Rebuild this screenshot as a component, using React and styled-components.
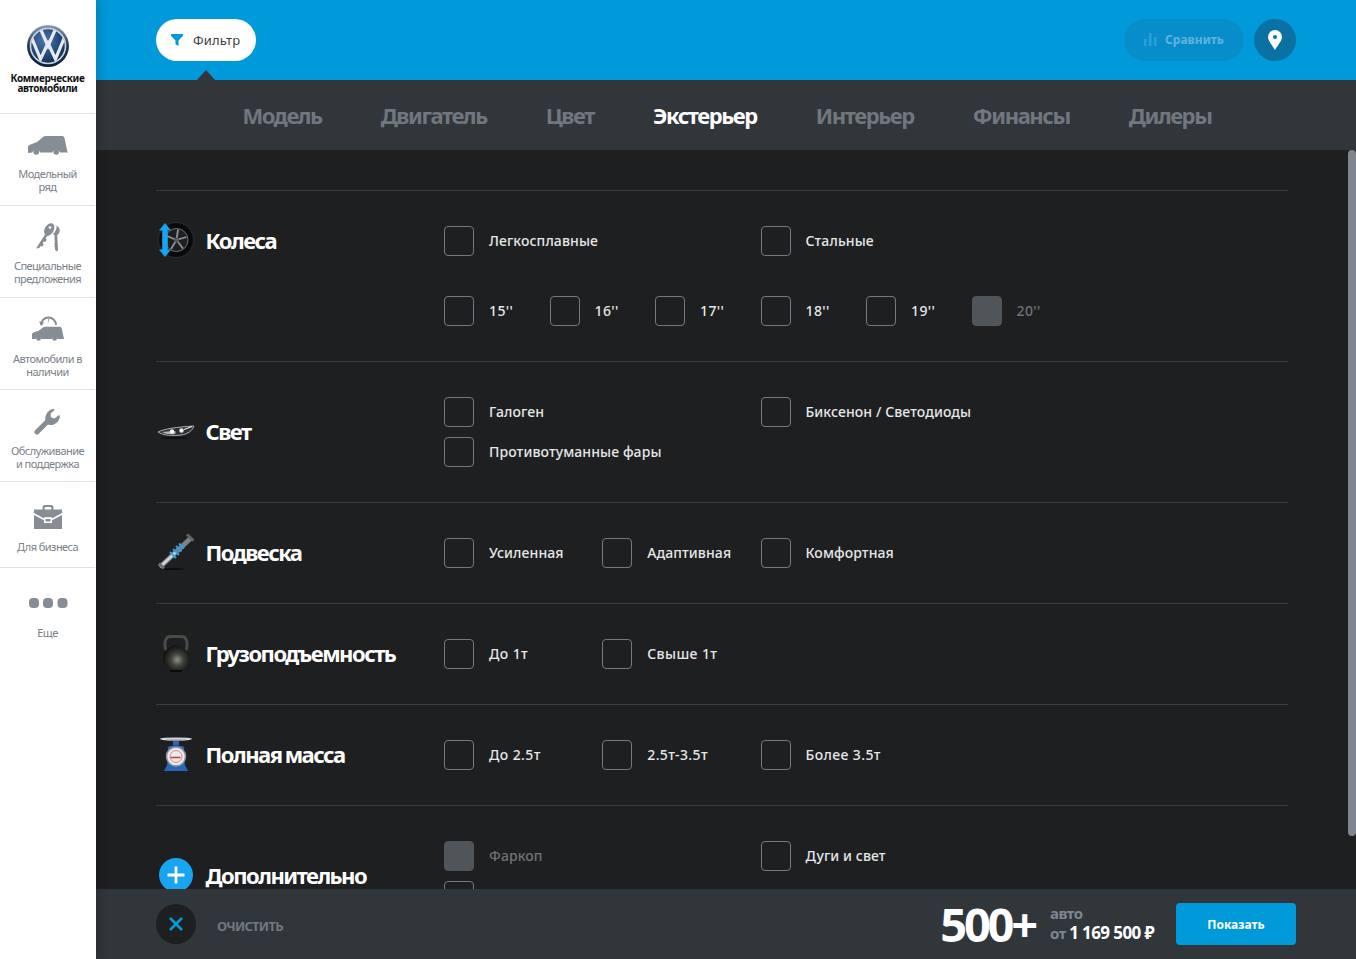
import styled, { createGlobalStyle } from 'styled-components'

const Global = createGlobalStyle`
  html, body { margin: 0; height: 100%; overflow: hidden; }
  body { font-family: "Noto Sans", "Open Sans", "Liberation Sans", sans-serif; background: #1e1f21; }
`

const Page = styled.div`
  display: flex;
  height: 100vh;
`

const Sidebar = styled.aside`
  position: relative;
  z-index: 2;
  flex: 0 0 96px;
  background: #fff;
  box-shadow: 3px 0 10px rgba(0, 0, 0, 0.18);
`

const Brand = styled.div`
  height: 114px;
  box-sizing: border-box;
  padding-top: 24px;
  margin-right: 1px;
  border-bottom: 1px solid #dfe1e3;
  text-align: center;
  font-size: 10px;
  font-weight: 700;
  line-height: 10px;
  color: #0f1113;
  letter-spacing: -0.35px;

  svg { display: block; margin: 0 auto 5px; }
`

const NavItem = styled.div`
  height: ${p => p.$h}px;
  box-sizing: border-box;
  margin-right: 1px;
  border-bottom: ${p => (p.$last ? 'none' : '1px solid #dfe1e3')};
  padding-top: ${p => p.$pad}px;
  text-align: center;
  font-size: 11px;
  line-height: 13px;
  letter-spacing: -0.55px;
  color: #7a8188;

  svg { display: block; margin: 0 auto ${p => p.$iconGap}px; }
`

const Main = styled.main`
  flex: 1;
  min-width: 0;
  display: flex;
  flex-direction: column;
`

const TopBar = styled.header`
  flex: 0 0 80px;
  box-sizing: border-box;
  padding: 19px 60px;
  display: flex;
  align-items: flex-start;
  gap: 10px;
  background: #0099da;
`

const FilterButton = styled.div`
  position: relative;
  width: 100px;
  height: 42px;
  box-sizing: border-box;
  padding-left: 15px;
  display: flex;
  align-items: center;
  gap: 10px;
  margin-right: auto;
  border-radius: 21px;
  background: #fff;
  font-size: 13px;
  letter-spacing: 0.1px;
  color: #3a3f44;

  &::after {
    content: '';
    position: absolute;
    left: 41px;
    top: 51px;
    border-left: 9px solid transparent;
    border-right: 9px solid transparent;
    border-bottom: 10px solid #31363b;
  }
`

const CompareButton = styled.div`
  width: 120px;
  height: 42px;
  box-sizing: border-box;
  padding-bottom: 1px;
  display: flex;
  align-items: center;
  justify-content: center;
  gap: 8px;
  border-radius: 21px;
  background: #088dca;
  font-size: 12px;
  font-weight: 700;
  color: #5fb4de;
`

const PinButton = styled.div`
  width: 42px;
  height: 42px;
  display: flex;
  align-items: center;
  justify-content: center;
  border-radius: 50%;
  background: #0a72a3;
`

const Tabs = styled.nav`
  flex: 0 0 70px;
  box-sizing: border-box;
  padding-left: 2px;
  display: flex;
  align-items: center;
  justify-content: center;
  gap: 59px;
  background: #31363b;
`

const Tab = styled.span`
  font-size: 22px;
  font-weight: 700;
  letter-spacing: -1.42px;
  color: ${p => (p.$active ? '#fff' : '#70777e')};
`

const Body = styled.div`
  position: relative;
  flex: 1;
  min-height: 0;
  overflow: hidden;
  padding: 40px 68px 0 60px;
  background: #1e1f21;
`

const ScrollThumb = styled.div`
  position: absolute;
  top: 0;
  right: 0;
  width: 8px;
  height: 686px;
  border-radius: 4px;
  background: #7f868d;
`

const Row = styled.section`
  display: grid;
  grid-template-columns: 288px 633px;
  padding: 35px 0;
  border-top: 1px solid #393c40;
`

const RowTitle = styled.div`
  display: flex;
  align-items: center;
  box-sizing: border-box;
  height: ${p => (p.$top ? '30px' : 'auto')};
  padding-bottom: 2px;
  font-size: 22px;
  font-weight: 700;
  line-height: 26px;
  letter-spacing: -1.5px;
  word-spacing: -1px;
  color: #fff;

  svg { flex: none; margin: -6px 9.5px -6px 0; }
`

const Options = styled.div`
  display: grid;
  grid-template-columns: repeat(12, 1fr);
  row-gap: ${p => p.$gap}px;
`

const Option = styled.label`
  grid-column: span ${p => p.$span};
  display: flex;
  align-items: center;
  gap: 15px;
  height: 30px;
  font-size: 14px;
  font-weight: 500;
  letter-spacing: ${p => (p.$digits ? '0.4px' : '0.1px')};
  color: ${p => (p.$off ? '#6d7378' : '#e6e7e8')};
`

const OptionText = styled.span`
  padding-bottom: 1px;
`

const Box = styled.span`
  flex: none;
  width: 30px;
  height: 30px;
  box-sizing: border-box;
  border-radius: 4px;
  border: 1px solid ${p => (p.$off ? '#50555a' : '#74797e')};
  background: ${p => (p.$off ? '#50555a' : 'transparent')};
`

const Footer = styled.footer`
  position: relative;
  flex: 0 0 70px;
  box-sizing: border-box;
  padding: 0 60px;
  display: flex;
  align-items: center;
  background: #31363b;
`

const ClearButton = styled.div`
  width: 40px;
  height: 40px;
  margin-right: 21px;
  display: flex;
  align-items: center;
  justify-content: center;
  border-radius: 50%;
  background: #1e1f21;
`

const ClearText = styled.span`
  margin-right: auto;
  padding-top: 3px;
  font-size: 13px;
  font-weight: 700;
  letter-spacing: -0.75px;
  color: #70777e;
`

const Count = styled.span`
  margin-right: 15px;
  font-size: 47px;
  font-weight: 700;
  letter-spacing: -3.2px;
  line-height: 46px;
  color: #fff;
`

const PriceBlock = styled.div`
  width: 126px;
  padding-bottom: 2px;
  font-size: 15px;
  font-weight: 700;
  line-height: 19px;
  letter-spacing: -0.5px;
  color: #7f868d;
`

const Price = styled.span`
  font-size: 17px;
  letter-spacing: -0.6px;
  color: #fff;
`

const ShowButton = styled.div`
  width: 120px;
  height: 42px;
  display: flex;
  align-items: center;
  justify-content: center;
  border-radius: 4px;
  background: #0099da;
  font-size: 12px;
  font-weight: 700;
  color: #fff;
`

const VwLogo = () => (
  <svg width="44" height="44" viewBox="0 0 44 44">
    <defs>
      <radialGradient id="vwBlue" cx="0.4" cy="0.35" r="0.75">
        <stop offset="0" stopColor="#4c77ab" />
        <stop offset="0.6" stopColor="#224775" />
        <stop offset="1" stopColor="#0f2343" />
      </radialGradient>
      <linearGradient id="vwRing" x1="0" y1="0" x2="0" y2="1">
        <stop offset="0" stopColor="#8a9db3" />
        <stop offset="0.5" stopColor="#22395a" />
        <stop offset="1" stopColor="#0c1c38" />
      </linearGradient>
      <clipPath id="vwClip"><circle cx="22" cy="22" r="17" /></clipPath>
    </defs>
    <circle cx="22" cy="22" r="21" fill="url(#vwRing)" />
    <circle cx="22" cy="22" r="17.5" fill="url(#vwBlue)" stroke="#c9d2dc" strokeWidth="1.6" />
    <g clipPath="url(#vwClip)" fill="none" stroke="#e6eaee" strokeWidth="3.2">
      <path d="M14.500 5 22 22 29.500 5" />
      <path d="M5 12 14.500 35 22 19 29.500 35 39 12" />
    </g>
  </svg>
)

const Van = () => (
  <svg width="42" height="20" viewBox="0 0 42 20" fill="#868d94">
    <path d="M1 18V12.500c0-1.500 1-2.600 2.500-3L10 7l6-5c1-.8 2-1 3.500-1H35c1.500 0 2.200.7 2.500 2L40 15l.8 2.500H33a4 4 0 0 0-7.600 0H13a4 4 0 0 0-7.600 0Z" />
    <circle cx="9.200" cy="17" r="2.800" />
    <circle cx="29.200" cy="17" r="2.800" />
  </svg>
)

const Keys = () => (
  <svg width="26" height="32" viewBox="0 0 26 32" fill="#868d94">
    <path d="M1 28.500 10 14.500c-1.500-2-1.200-5 .5-7.500 2-2.800 5-4.500 7.300-3.200 2 1.300 2 5 .3 8-1.500 2.500-3.700 4.300-6 4.300l-1.500 2.400 1.200 1.200-1.500 2.200-1.500-.4-1 1.600.8 1.400-1.500 2.200-1.500-.6-1.300 2Z" />
    <path d="M20 5.500c2.500 0 4.700 2 4.700 5 0 2-1 3.600-2.500 4.500l.8 15-1.300 1.600-1.800-2 .3-1.800-1-1 .8-1.300-.8-1.200.6-1.300-.4-8.300-1.800-.4c2.800-2 4.400-5 4-8.200Z" />
    <circle cx="15" cy="7.500" r="1.300" fill="#fff" />
  </svg>
)

const VanClock = () => (
  <svg width="34" height="26" viewBox="0 0 34 26">
    <path d="M10 10a7.500 7.500 0 1 1 15 0" fill="none" stroke="#868d94" strokeWidth="2" />
    <path d="M8 6.500 10.500 11l2.500-3.500Z M17 3.500v5l1-4Z" fill="#868d94" />
    <path fill="#868d94" d="M1 24v-4.500c0-1 .8-1.800 2-2.200l5-1.800 4-3c.8-.5 1.500-.8 3-.8h13.500c1.200 0 2 .5 2.300 1.800L32.500 22l.8 2H26.500a3 3 0 0 0-5.800 0H10.500a3 3 0 0 0-5.800 0Z" />
    <circle cx="7.600" cy="23.400" r="2.400" fill="#868d94" />
    <circle cx="23.600" cy="23.400" r="2.400" fill="#868d94" />
  </svg>
)

const Wrench = () => (
  <svg width="28" height="28" viewBox="0 0 28 28">
    <path d="M3 25 14 14" stroke="#868d94" strokeWidth="5" strokeLinecap="round" />
    <path fill="#868d94" d="M12 16c-1.800-4.600-.3-9.800 3.700-12.800 1.200-.9 2.800-1.400 4-1.500l1 1.100-4.100 3.800.3 3.700 3.500 1.200 4.400-3.300 1.100.4c.1 4-2.500 7.500-6 8.900-2.800 1-5.300.6-6.900-.5Z" />
  </svg>
)

const Briefcase = () => (
  <svg width="28" height="24" viewBox="0 0 28 24" fill="#868d94">
    <path d="M8.500 5V2.500C8.500 1 9.500 0 11 0h6c1.500 0 2.500 1 2.500 2.500V5h-2.200V2.800c0-.4-.3-.7-.7-.7h-5.200c-.4 0-.7.3-.7.700V5Z" />
    <path d="M0 4.500h28V8l-10 5.500v-1.300h-8v1.300L0 8Z" />
    <path d="M0 10l10 5.200V18h8v-2.800L28 10v14H0Z" />
    <path d="M11.500 14h5v2.500h-5Z" />
  </svg>
)

const Dots = () => (
  <svg width="40" height="10" viewBox="0 0 40 10" fill="#868d94">
    <rect x="1" width="10" height="10" rx="4" />
    <rect x="15" width="10" height="10" rx="4" />
    <rect x="29.500" width="10" height="10" rx="4" />
  </svg>
)

const WheelIcon = () => (
  <svg width="40" height="40" viewBox="0 0 40 40">
    <circle cx="20" cy="20" r="17.500" fill="#08090a" stroke="#2a2d30" strokeWidth="1" />
    <circle cx="20.500" cy="20" r="11.500" fill="#1d1f21" stroke="#6d7175" strokeWidth="1" />
    <g stroke="#8f9397" strokeWidth="1.800">
      <path d="M20.500 20 22 9.500" />
      <path d="M20.500 20 30.500 17" />
      <path d="M20.500 20 27 28.500" />
      <path d="M20.500 20 15 29" />
      <path d="M20.500 20 11 16" />
    </g>
    <circle cx="20.500" cy="20" r="2.500" fill="#55585b" />
    <path d="M9 3 15 10.500H11.800V29.500H15L9 37 3 29.500H6.200V10.500H3Z" fill="#18a4ee" />
  </svg>
)

const LightIcon = () => (
  <svg width="40" height="40" viewBox="0 0 40 40">
    <path d="M2 21c6-3 18-5 36-6-2 5-6 8-13 9-8 1-18 .5-23-3Z" fill="#2c3033" stroke="#aab0b5" strokeWidth="1" />
    <path d="M6 21c6-1 12-1 14-.5l-1 2.500c-5 .5-10 0-13-2Z" fill="#b4b9bd" />
    <circle cx="16" cy="20.500" r="2.200" fill="#f4f6f7" />
    <circle cx="25.500" cy="19.500" r="2.200" fill="#eef0f2" />
    <path d="M28 18.500l8-3" stroke="#e8eaec" strokeWidth="1.200" />
    <ellipse cx="18" cy="27" rx="13" ry="1" fill="#000" opacity="0.5" />
  </svg>
)

const ShockIcon = () => (
  <svg width="40" height="40" viewBox="0 0 40 40">
    <ellipse cx="16" cy="37" rx="12" ry="1" fill="#000" opacity="0.6" />
    <path d="M4 35 35 6" stroke="#7c8286" strokeWidth="5" />
    <path d="M4 35 20 20" stroke="#d0d4d8" strokeWidth="2.500" />
    <path d="M31 2.500 37.500 8.500" stroke="#5f6468" strokeWidth="3" />
    <path d="M3 31.500 8 36.500" stroke="#6a6f73" strokeWidth="3" />
    <g stroke="#2f9fe6" strokeWidth="2">
      <path d="M14 20 20 26" />
      <path d="M17 17 23 23" />
      <path d="M20 14 25.500 19.500" />
      <path d="M23 11.500 28 16.500" />
    </g>
  </svg>
)

const KettleIcon = () => (
  <svg width="40" height="40" viewBox="0 0 40 40">
    <defs>
      <radialGradient id="ketBall" cx="0.55" cy="0.55" r="0.6">
        <stop offset="0" stopColor="#8e9184" />
        <stop offset="0.4" stopColor="#3f413b" />
        <stop offset="1" stopColor="#0a0a0a" />
      </radialGradient>
    </defs>
    <path d="M10.500 18C7 11 9.500 3.500 14 3.500h12c4.500 0 7 7.500 3.500 14.500" fill="none" stroke="#4a4b47" strokeWidth="3" />
    <circle cx="20" cy="25.500" r="13" fill="url(#ketBall)" />
    <path d="M14 38h12" stroke="#0a0a0a" strokeWidth="2" />
  </svg>
)

const ScaleIcon = () => (
  <svg width="40" height="40" viewBox="0 0 40 40">
    <ellipse cx="20" cy="5" rx="16" ry="1.600" fill="#d6d8da" />
    <path d="M10 5.500h20l-1.500 1.500h-17Z" fill="#8d9194" />
    <rect x="17" y="7" width="6" height="4" fill="#2a66b8" />
    <path d="M8 37 11 31 12 13c2-2 14-2 16 0l1 18 3 6Z" fill="#2a66b8" />
    <circle cx="20" cy="22.500" r="9.500" fill="#e9ecee" stroke="#8f9497" strokeWidth="1.500" />
    <circle cx="20" cy="22.500" r="6" fill="none" stroke="#d88" strokeWidth="1" />
    <path d="M14.500 23.500h10" stroke="#d9382e" strokeWidth="1.500" />
  </svg>
)

const PlusIcon = () => (
  <svg width="40" height="40" viewBox="0 0 40 40">
    <circle cx="20" cy="20" r="17" fill="#18a4ee" />
    <path d="M20 11.500v17M11.500 20h17" stroke="#fff" strokeWidth="2.800" />
  </svg>
)

const FilterIcon = () => (
  <svg width="12" height="12" viewBox="0 0 14 14" fill="#0099da">
    <path d="M0 0h14v2L8.800 7.500V14L5.200 12V7.500L0 2Z" />
  </svg>
)

const BarsIcon = () => (
  <svg width="13" height="13" viewBox="0 0 13 13" fill="#2a9fd8">
    <rect x="0" y="6" width="2.500" height="7" />
    <rect x="5" y="0" width="2.500" height="13" />
    <rect x="10" y="4" width="2.500" height="9" />
  </svg>
)

const PinIcon = () => (
  <svg width="14" height="20" viewBox="0 0 14 20">
    <path fillRule="evenodd" fill="#fff" d="M7 0a7 7 0 0 1 7 7c0 4-4.500 8.500-7 13C4.500 15.500 0 11 0 7a7 7 0 0 1 7-7Zm0 5a2 2 0 1 0 0 4 2 2 0 0 0 0-4Z" />
  </svg>
)

const CrossIcon = () => (
  <svg width="16" height="16" viewBox="0 0 16 16">
    <path d="M2 2 14 14M14 2 2 14" stroke="#0099da" strokeWidth="2.600" />
  </svg>
)

const nav = [
  { icon: <Van />, lines: ['Модельный', 'ряд'], h: 92, pad: 21, gap: 12 },
  { icon: <Keys />, lines: ['Специальные', 'предложения'], h: 92, pad: 14, gap: 7 },
  { icon: <VanClock />, lines: ['Автомобили в', 'наличии'], h: 92, pad: 17, gap: 11 },
  { icon: <Wrench />, lines: ['Обслуживание', 'и поддержка'], h: 92, pad: 17, gap: 9 },
  { icon: <Briefcase />, lines: ['Для бизнеса'], h: 86, pad: 23, gap: 11 },
  { icon: <Dots />, lines: ['Еще'], h: 92, pad: 30, gap: 18, last: true },
]

const tabs = ['Модель', 'Двигатель', 'Цвет', 'Экстерьер', 'Интерьер', 'Финансы', 'Дилеры']

const rows = [
  {
    title: 'Колеса',
    icon: <WheelIcon />,
    top: true,
    gap: 40,
    options: [
      ['Легкосплавные', 6],
      ['Стальные', 6],
      ["15''", 2],
      ["16''", 2],
      ["17''", 2],
      ["18''", 2],
      ["19''", 2],
      ["20''", 2, true],
    ],
  },
  {
    title: 'Свет',
    icon: <LightIcon />,
    gap: 10,
    options: [
      ['Галоген', 6],
      ['Биксенон / Светодиоды', 6],
      ['Противотуманные фары', 6],
    ],
  },
  {
    title: 'Подвеска',
    icon: <ShockIcon />,
    gap: 10,
    options: [
      ['Усиленная', 3],
      ['Адаптивная', 3],
      ['Комфортная', 3],
    ],
  },
  {
    title: 'Грузоподъемность',
    icon: <KettleIcon />,
    gap: 10,
    options: [
      ['До 1т', 3],
      ['Свыше 1т', 3],
    ],
  },
  {
    title: 'Полная масса',
    icon: <ScaleIcon />,
    gap: 10,
    options: [
      ['До 2.5т', 3],
      ['2.5т-3.5т', 3],
      ['Более 3.5т', 3],
    ],
  },
  {
    title: 'Дополнительно',
    icon: <PlusIcon />,
    gap: 10,
    options: [
      ['Фаркоп', 6, true],
      ['Дуги и свет', 6],
      ['', 6],
    ],
  },
]

const App = () => (
  <Page>
    <Global />
    <Sidebar>
      <Brand>
        <VwLogo />
        Коммерческие<br />автомобили
      </Brand>
      {nav.map(item => (
        <NavItem key={item.lines[0]} $h={item.h} $pad={item.pad} $iconGap={item.gap} $last={item.last}>
          {item.icon}
          {item.lines.map(line => <div key={line}>{line}</div>)}
        </NavItem>
      ))}
    </Sidebar>
    <Main>
      <TopBar>
        <FilterButton><FilterIcon />Фильтр</FilterButton>
        <CompareButton><BarsIcon />Сравнить</CompareButton>
        <PinButton><PinIcon /></PinButton>
      </TopBar>
      <Tabs>
        {tabs.map(tab => <Tab key={tab} $active={tab === 'Экстерьер'}>{tab}</Tab>)}
      </Tabs>
      <Body>
        <ScrollThumb />
        {rows.map(row => (
          <Row key={row.title}>
            <RowTitle $top={row.top}>{row.icon}{row.title}</RowTitle>
            <Options $gap={row.gap}>
              {row.options.map(([label, span, off], i) => (
                <Option key={i} $span={span} $off={off} $digits={/\d/.test(label)}>
                  <Box $off={off} />
                  <OptionText>{label}</OptionText>
                </Option>
              ))}
            </Options>
          </Row>
        ))}
      </Body>
      <Footer>
        <ClearButton><CrossIcon /></ClearButton>
        <ClearText>ОЧИСТИТЬ</ClearText>
        <Count>500+</Count>
        <PriceBlock>
          авто<br />
          от <Price>1 169 500 ₽</Price>
        </PriceBlock>
        <ShowButton>Показать</ShowButton>
      </Footer>
    </Main>
  </Page>
)

export default App
